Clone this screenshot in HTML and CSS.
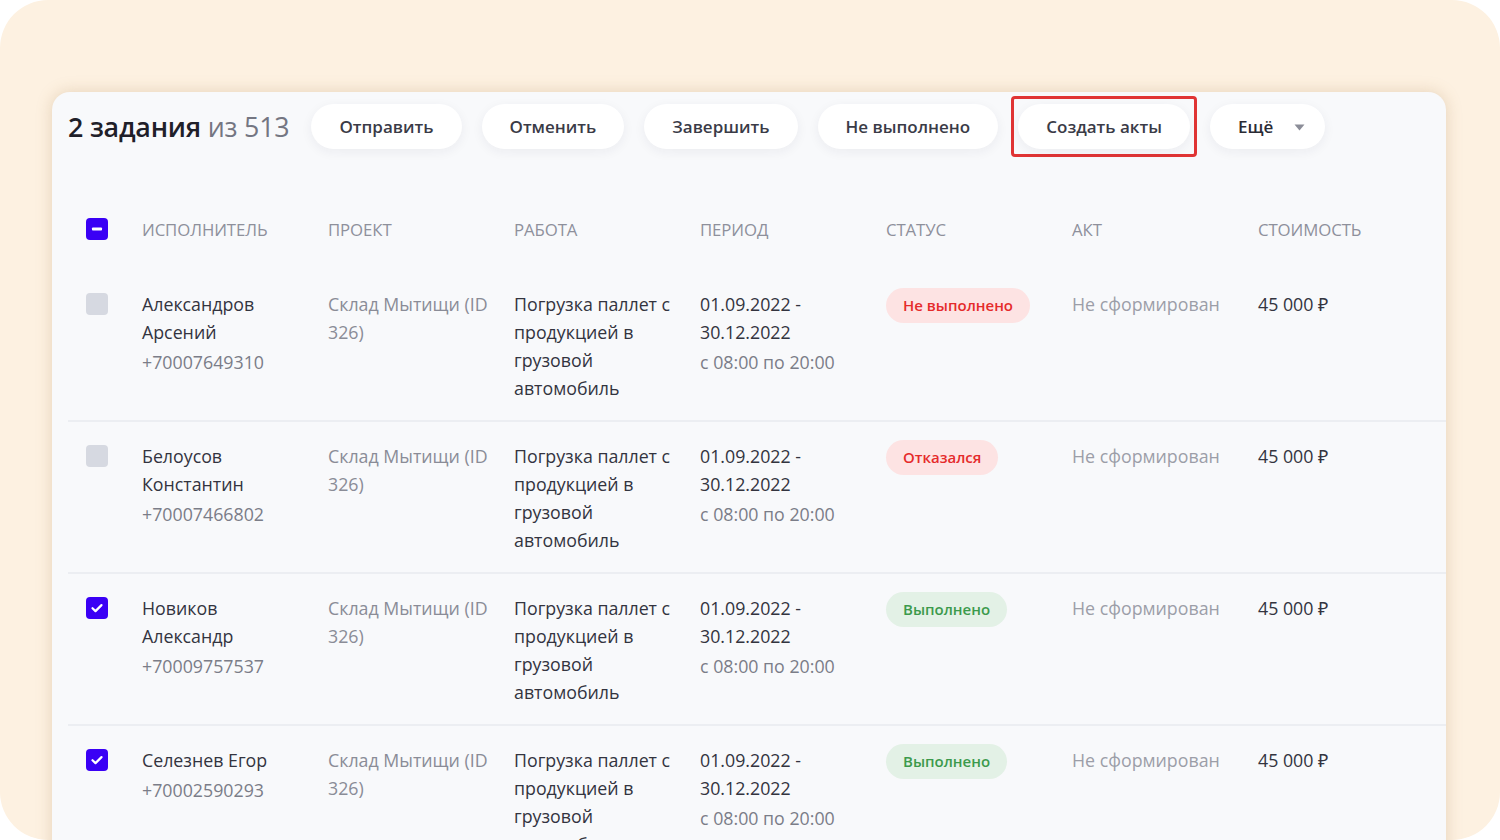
FILE: index.html
```html
<!DOCTYPE html>
<html lang="ru">
<head>
<meta charset="utf-8">
<title>Задания</title>
<link rel="stylesheet" href="styles.css">
</head>
<body>
<div class="frame">
  <div class="card">
    <div class="toolbar">
      <div class="title"><b>2 задания</b> <span class="muted">из 513</span></div>
      <button class="btn">Отправить</button>
      <button class="btn">Отменить</button>
      <button class="btn">Завершить</button>
      <button class="btn">Не выполнено</button>
      <div class="highlight"><button class="btn">Создать акты</button></div>
      <button class="btn btn-more">Ещё <svg class="caret" width="11" height="7" viewBox="0 0 11 7"><path d="M0.5 0.5h10L5.5 6.5z" fill="#8b8d98"/></svg></button>
    </div>

    <div class="table">
      <div class="thead">
        <div class="cb-cell"><span class="cb cb-on"><svg width="22" height="22" viewBox="0 0 22 22"><rect x="6" y="9.5" width="10" height="3" rx="0.8" fill="#fff"/></svg></span></div>
        <div>ИСПОЛНИТЕЛЬ</div>
        <div>ПРОЕКТ</div>
        <div>РАБОТА</div>
        <div>ПЕРИОД</div>
        <div>СТАТУС</div>
        <div>АКТ</div>
        <div>СТОИМОСТЬ</div>
      </div>

      <div class="row">
        <div class="cb-cell"><span class="cb"></span></div>
        <div class="dark">Александров<br>Арсений<div class="sub">+70007649310</div></div>
        <div class="grey">Склад Мытищи (ID<br>326)</div>
        <div class="dark">Погрузка паллет с<br>продукцией в<br>грузовой<br>автомобиль</div>
        <div class="dark">01.09.2022 -<br>30.12.2022<div class="sub">с 08:00 по 20:00</div></div>
        <div><span class="badge badge-red">Не выполнено</span></div>
        <div class="light">Не сформирован</div>
        <div class="dark">45 000 ₽</div>
      </div>

      <div class="row">
        <div class="cb-cell"><span class="cb"></span></div>
        <div class="dark">Белоусов<br>Константин<div class="sub">+70007466802</div></div>
        <div class="grey">Склад Мытищи (ID<br>326)</div>
        <div class="dark">Погрузка паллет с<br>продукцией в<br>грузовой<br>автомобиль</div>
        <div class="dark">01.09.2022 -<br>30.12.2022<div class="sub">с 08:00 по 20:00</div></div>
        <div><span class="badge badge-red">Отказался</span></div>
        <div class="light">Не сформирован</div>
        <div class="dark">45 000 ₽</div>
      </div>

      <div class="row">
        <div class="cb-cell"><span class="cb cb-on"><svg width="22" height="22" viewBox="0 0 22 22"><path d="M6.5 11.2l3 2.9 6-6" fill="none" stroke="#fff" stroke-width="2.2" stroke-linecap="round" stroke-linejoin="round"/></svg></span></div>
        <div class="dark">Новиков<br>Александр<div class="sub">+70009757537</div></div>
        <div class="grey">Склад Мытищи (ID<br>326)</div>
        <div class="dark">Погрузка паллет с<br>продукцией в<br>грузовой<br>автомобиль</div>
        <div class="dark">01.09.2022 -<br>30.12.2022<div class="sub">с 08:00 по 20:00</div></div>
        <div><span class="badge badge-green">Выполнено</span></div>
        <div class="light">Не сформирован</div>
        <div class="dark">45 000 ₽</div>
      </div>

      <div class="row">
        <div class="cb-cell"><span class="cb cb-on"><svg width="22" height="22" viewBox="0 0 22 22"><path d="M6.5 11.2l3 2.9 6-6" fill="none" stroke="#fff" stroke-width="2.2" stroke-linecap="round" stroke-linejoin="round"/></svg></span></div>
        <div class="dark">Селезнев Егор<div class="sub">+70002590293</div></div>
        <div class="grey">Склад Мытищи (ID<br>326)</div>
        <div class="dark">Погрузка паллет с<br>продукцией в<br>грузовой<br>автомобиль</div>
        <div class="dark">01.09.2022 -<br>30.12.2022<div class="sub">с 08:00 по 20:00</div></div>
        <div><span class="badge badge-green">Выполнено</span></div>
        <div class="light">Не сформирован</div>
        <div class="dark">45 000 ₽</div>
      </div>
    </div>
  </div>
</div>
</body>
</html>
```

FILE: styles.css
```css
* { box-sizing: border-box; }

html, body {
  margin: 0;
  padding: 0;
  background: #ffffff;
}

body {
  font-family: "Open Sans", "Noto Sans", "DejaVu Sans", sans-serif;
  color: #33343f;
}

.frame {
  width: 1500px;
  height: 840px;
  background: #fdf1e1;
  border-radius: 48px;
  overflow: hidden;
  padding: 92px 54px 0 52px;
}

.card {
  background: #f8f9fb;
  border-radius: 18px 18px 0 0;
  height: 780px;
  padding: 12px 0 0 16px;
  box-shadow: 0 0 16px rgba(170, 130, 80, 0.28);
}

/* toolbar */
.toolbar {
  display: flex;
  align-items: center;
  gap: 20px;
  height: 45px;
}

.title {
  font-size: 26.8px;
  letter-spacing: -0.2px;
  color: #1f2029;
  margin-right: 2px;
  white-space: nowrap;
}

.title b { font-weight: 600; }

.title .muted {
  color: #747682;
  font-weight: 400;
}

.btn {
  font-family: inherit;
  height: 45px;
  border: none;
  border-radius: 23px;
  background: #ffffff;
  color: #3a3b47;
  font-size: 17px;
  font-weight: 600;
  padding: 0 28px;
  box-shadow: 0 3px 12px rgba(40, 40, 60, 0.06);
  white-space: nowrap;
  display: flex;
  align-items: center;
}

.highlight {
  border: 3px solid #e03434;
  border-radius: 4px;
  padding: 5px 4px;
  margin: -8px -7px;
}

.btn-more {
  padding: 0 20px 0 28px;
  gap: 21px;
  color: #2a2b35;
}

.caret { display: block; margin-top: 1px; }

/* table */
.table {
  margin-top: 39px;
}

.thead,
.row {
  display: grid;
  grid-template-columns: 74px repeat(6, 186px) 1fr;
}

.thead {
  height: 82px;
  align-items: center;
  font-size: 16.8px;
  color: #8e909b;
  letter-spacing: -0.1px;
}

.row {
  padding: 20px 0;
  font-size: 17.8px;
  line-height: 28px;
  border-bottom: 2px solid #eceef2;
  height: 152px;
  align-items: start;
}

.cb-cell {
  padding-left: 18px;
}

.row .cb-cell { padding-top: 3px; }

.cb {
  display: block;
  width: 22px;
  height: 22px;
  border-radius: 4px;
  background: #d6d9e1;
}

.cb svg { display: block; }

.cb-on { background: #3a00f5; }

.dark { color: #33343f; }
.grey { color: #8a8c97; }
.light { color: #9c9ea8; }

.sub {
  color: #7b7d88;
  margin-top: 2px;
}

.badge {
  display: inline-block;
  height: 35px;
  line-height: 35px;
  margin-top: -4px;
  padding: 0 17px;
  border-radius: 18px;
  font-size: 15px;
  font-weight: 600;
}

.badge-red {
  background: #fde3e3;
  color: #e52b2b;
}

.badge-green {
  background: #e3f1e6;
  color: #3c9a4c;
}
```
